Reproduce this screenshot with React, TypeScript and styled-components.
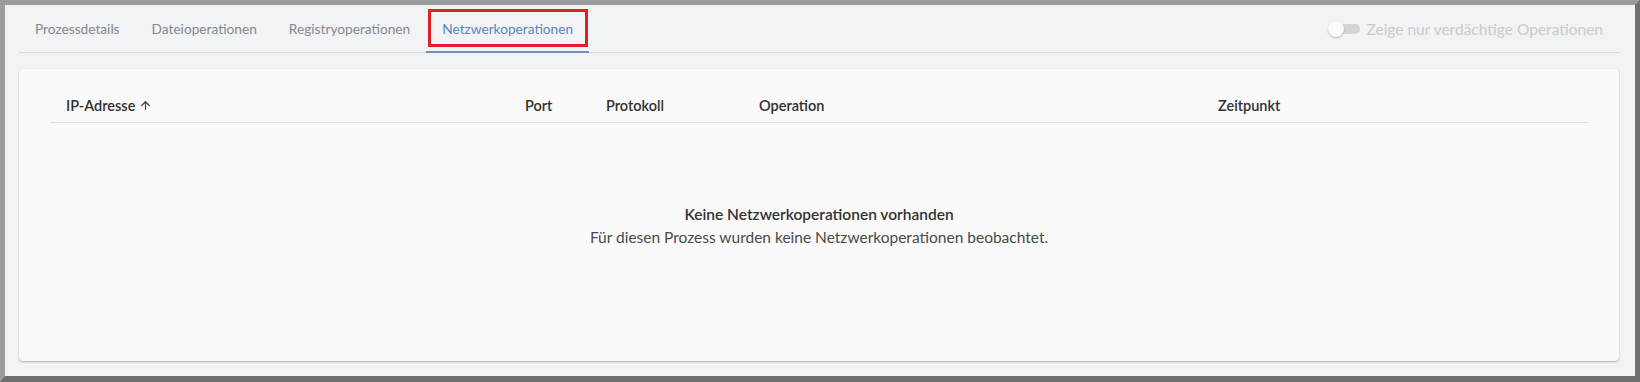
import styled, { createGlobalStyle } from "styled-components";
import { ArrowUp } from "lucide-react";

const GlobalStyle = createGlobalStyle`
  html, body {
    margin: 0;
    padding: 0;
    background: #f2f3f5;
  }
  * {
    box-sizing: border-box;
  }
`;

const tabs = [
  "Prozessdetails",
  "Dateioperationen",
  "Registryoperationen",
  "Netzwerkoperationen",
];

const columns = [
  { label: "IP-Adresse", sorted: true },
  { label: "Port" },
  { label: "Protokoll" },
  { label: "Operation" },
  { label: "Zeitpunkt" },
];

const App = () => {
  const active = 3;

  return (
    <>
      <GlobalStyle />
      <Frame>
        <TabBar>
          <TabList>
            {tabs.map((t, i) => (
              <Tab key={t} $active={i === active}>
                {t}
                {i === active && <Marker />}
              </Tab>
            ))}
          </TabList>
          <ToggleLabel>
            <Switch>
              <Track />
              <Thumb />
            </Switch>
            Zeige nur verdächtige Operationen
          </ToggleLabel>
        </TabBar>
        <Card>
          <HeaderRow>
            {columns.map((c) => (
              <HeadCell key={c.label}>
                {c.label}
                {c.sorted && <ArrowUp size={13} strokeWidth={2.2} />}
              </HeadCell>
            ))}
          </HeaderRow>
          <Empty>
            <EmptyTitle>Keine Netzwerkoperationen vorhanden</EmptyTitle>
            <EmptyText>
              Für diesen Prozess wurden keine Netzwerkoperationen beobachtet.
            </EmptyText>
          </Empty>
        </Card>
      </Frame>
    </>
  );
};

const Frame = styled.div`
  width: 1640px;
  height: 382px;
  display: flex;
  flex-direction: column;
  background: #f2f3f5;
  border-style: solid;
  border-width: 5px 5px 6px 5px;
  border-color: #9b9ca0 #6f7074 #6f7074 #9b9ca0;
  padding: 0 16px 15px 14px;
  font-family: Lato, "Open Sans", sans-serif;
`;

const TabBar = styled.div`
  display: flex;
  justify-content: space-between;
  align-items: stretch;
  height: 48px;
  border-bottom: 1px solid #d6d8dc;
  margin-right: -1px;
  margin-bottom: 16px;
`;

const TabList = styled.div`
  display: flex;
`;

const Tab = styled.div<{ $active?: boolean }>`
  position: relative;
  display: flex;
  align-items: center;
  padding: 0 16px;
  font-size: 13.7px;
  color: ${(p) => (p.$active ? "#5b86bd" : "#85888e")};
  border-bottom: 2px solid ${(p) => (p.$active ? "#6b90c1" : "transparent")};
  margin-bottom: -1px;
`;

const Marker = styled.span`
  position: absolute;
  left: 2px;
  right: 1px;
  top: 4px;
  bottom: 4px;
  border: 3px solid #e41e26;
  pointer-events: none;
`;

const ToggleLabel = styled.div`
  display: flex;
  align-items: center;
  gap: 7px;
  padding-right: 17px;
  font-size: 15.5px;
  color: #c9cacd;
`;

const Switch = styled.span`
  position: relative;
  width: 32px;
  height: 18px;
  display: flex;
  align-items: center;
`;

const Track = styled.span`
  width: 28px;
  height: 10px;
  margin-left: 4px;
  border-radius: 5px;
  background: #d4d5d8;
`;

const Thumb = styled.span`
  position: absolute;
  left: 0;
  top: 1px;
  width: 16px;
  height: 16px;
  border-radius: 50%;
  background: #fbfbfb;
  box-shadow: 0 1px 2px rgba(0, 0, 0, 0.25);
`;

const Card = styled.div`
  flex: 1;
  display: flex;
  flex-direction: column;
  background: #fafafa;
  border-radius: 4px;
  box-shadow: 0 1px 2px rgba(0, 0, 0, 0.28), 0 0 1px rgba(0, 0, 0, 0.08);
  padding: 19px 31px 0 31px;
`;

const HeaderRow = styled.div`
  display: grid;
  grid-template-columns: 459px 81px 153px 459px 1fr;
  height: 35px;
  align-items: center;
  border-bottom: 1px solid #e0e0e0;
`;

const HeadCell = styled.div`
  display: flex;
  align-items: center;
  gap: 4px;
  padding-left: 16px;
  font-size: 14.5px;
  font-weight: 600;
  color: #303030;
  svg {
    color: #444;
  }
`;

const Empty = styled.div`
  flex: 1;
  display: flex;
  flex-direction: column;
  align-items: center;
  justify-content: center;
  gap: 5px;
  padding-bottom: 34px;
`;

const EmptyTitle = styled.div`
  font-size: 15.5px;
  font-weight: 600;
  color: #333;
`;

const EmptyText = styled.div`
  font-size: 15.5px;
  color: #4a4a4a;
`;

export default App;
